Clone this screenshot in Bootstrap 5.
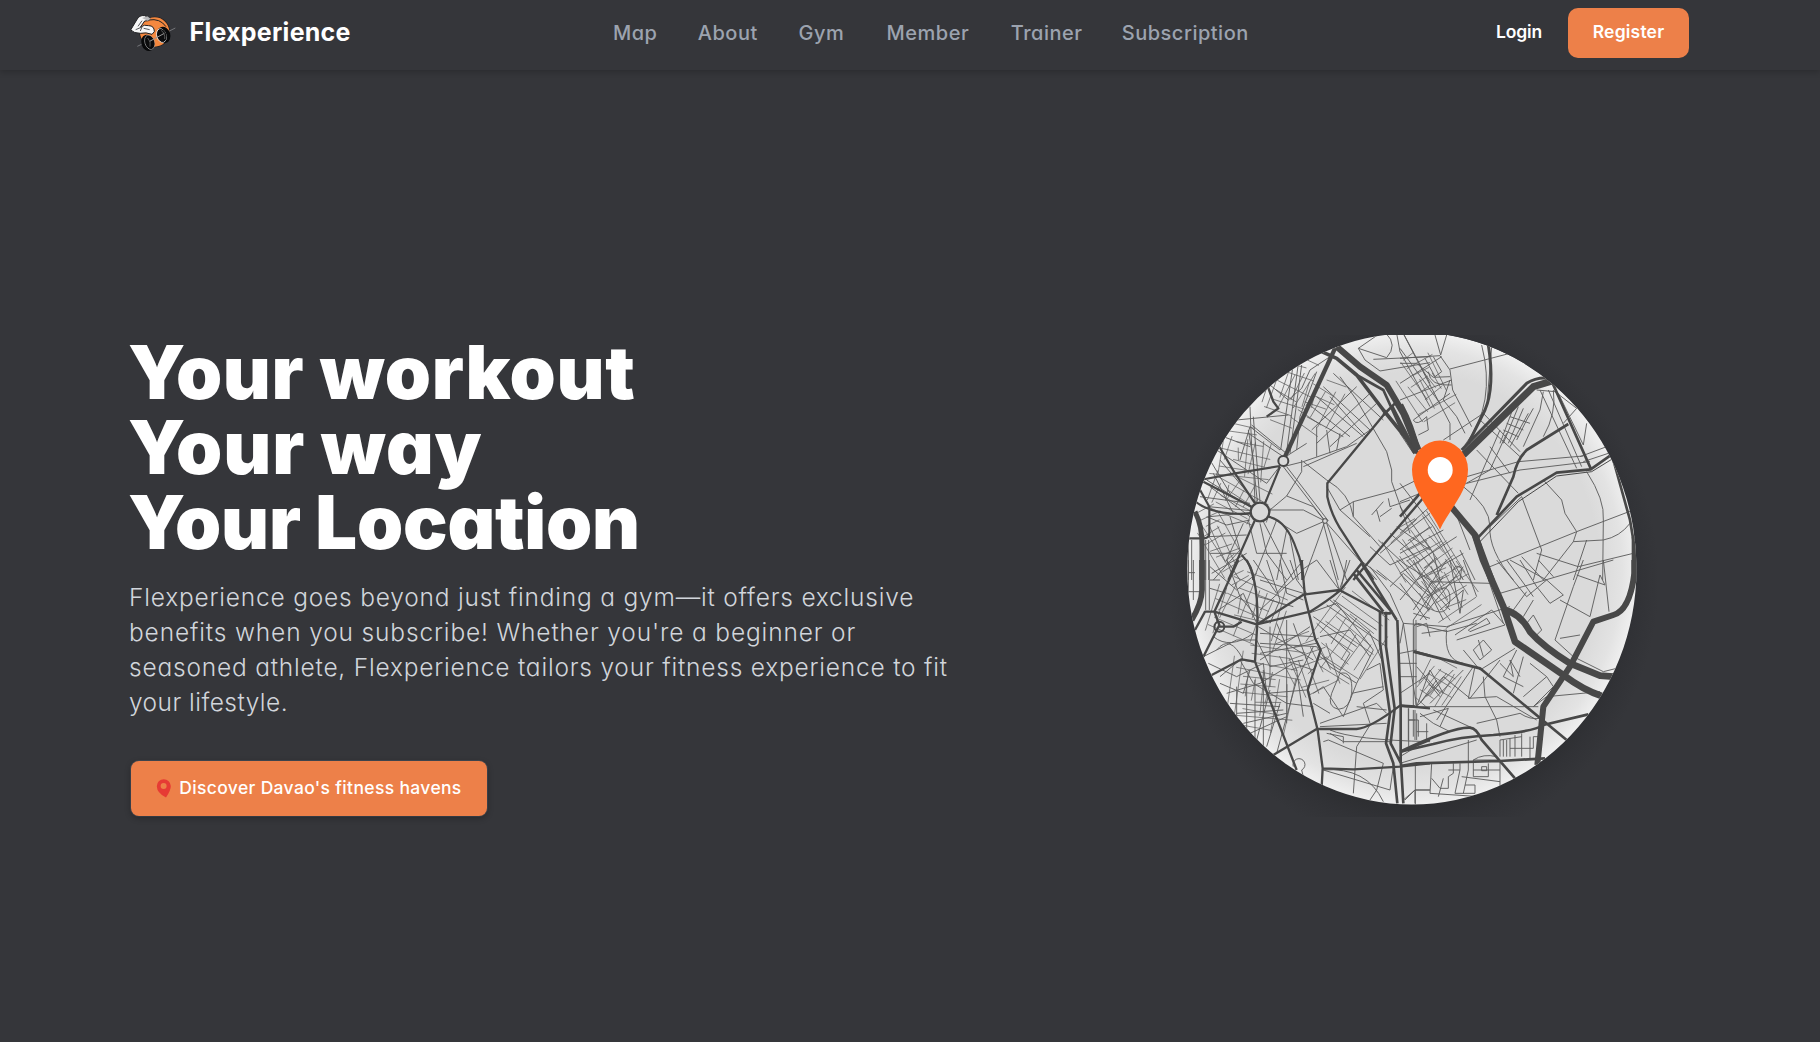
<!DOCTYPE html>
<html lang="en">
<head>
<meta charset="utf-8">
<meta name="viewport" content="width=device-width, initial-scale=1">
<title>Flexperience</title>
<link href="https://cdn.jsdelivr.net/npm/bootstrap@5.3.0/dist/css/bootstrap.min.css" rel="stylesheet">
<style>
body{background:#35363a;font-family:Inter,"Open Sans",sans-serif;font-feature-settings:"cv11";color:#fff;min-height:100vh;overflow:hidden}
.topbar{height:70px;padding:0 131px 0 129px;box-shadow:0 2px 6px rgba(0,0,0,.2)}
.brand-name{font-size:25px;font-weight:700;letter-spacing:.25px;line-height:32px;margin:0 0 6px 12.5px}
.site-links{left:613px;top:0;height:66px;gap:40px}
.site-links a{color:#9ca3af;font-size:20px;font-weight:500;letter-spacing:.5px;margin-right:-.5px;text-decoration:none;white-space:nowrap}
.link-map{width:45.3px}.link-about{width:61.3px}.link-gym{width:48.5px}.link-member{width:84.7px}.link-trainer{width:71.5px}
.login-link{font-size:17.5px;font-weight:600;letter-spacing:-.15px;margin:0 26px 1px 0;text-decoration:none}
.btn-brand{background:#ed8049;color:#fff;border:0;font-weight:600}
.btn-brand:hover{background:#e0733c;color:#fff}
.btn-register{width:121px;height:50px;border-radius:10px;font-size:17.5px;letter-spacing:.2px;padding:0 0 1px}
.account{margin-bottom:4px}
.hero{padding:265px 184px 0 129px}
.hero-title{font-size:74px;font-weight:900;line-height:75px;letter-spacing:.7px;margin:0 0 19.5px -1px}
.hero-title .way{letter-spacing:.9px}
.hero-title .place{letter-spacing:-.2px}
.hero-copy{font-size:24.5px;font-weight:300;line-height:35px;letter-spacing:.79px;color:#d1d5db;margin:0 0 41px;white-space:nowrap}
.copy-wide{letter-spacing:.85px}
.copy-tight{letter-spacing:.45px}
.btn-discover{width:356px;height:55px;border-radius:8px;margin-left:2px;font-size:17.5px;font-weight:500;letter-spacing:.34px;padding:0;box-shadow:0 2px 6px rgba(0,0,0,.3),0 0 0 1px rgba(75,85,99,.6);margin-top:1px}
.btn-discover svg{margin-right:7px}
.map-art{margin:-15px -24px 0 0}
</style>
<script src="https://cdn.jsdelivr.net/npm/bootstrap@5.3.0/dist/js/bootstrap.bundle.min.js"></script>
</head>
<body>
<header class="topbar d-flex align-items-center justify-content-between position-relative">
  <a href="#" class="d-flex align-items-center text-white text-decoration-none">
    <svg width="48" height="40" viewBox="57 37 144 120" class="mb-1">
      <circle cx="134" cy="94" r="46" fill="#1c1c1e"/>
      <circle cx="134" cy="94" r="44" fill="#f5883f"/>
      <path d="M116 58Q150 52 168 78" fill="none" stroke="#222" stroke-width="3"/>
      <path d="M62 88L80 58Q88 42 104 45L120 53L116 60L104 61L91 80Q103 70 116 75Q133 75 133 93L126 101Q108 94 91 98Q72 98 62 88Z" fill="#f7f7f7" stroke="#202022" stroke-width="3"/>
      <path d="M96 52L112 47L122 54L113 60L104 56Z" fill="#b9b9bb"/>
      <path d="M77 87L96 79L91 91M101 83L119 87M96 60L84 77" stroke="#55565a" stroke-width="3" fill="none"/>
      <path d="M82 137L105 126M142 109L196 82" stroke="#747579" stroke-width="3"/>
      <g transform="rotate(-17 115 126)"><ellipse cx="113" cy="126" rx="19" ry="25" fill="#08090a"/><ellipse cx="119" cy="126" rx="14" ry="22" fill="none" stroke="#a9a9aa" stroke-width="2"/><ellipse cx="120" cy="126" rx="13" ry="20" fill="#0b0b0c"/></g>
      <g transform="rotate(-17 160 103)"><ellipse cx="161" cy="103" rx="20" ry="25" fill="#08090a"/><ellipse cx="154" cy="103" rx="14" ry="21" fill="none" stroke="#e1e1e1" stroke-width="2.5"/><ellipse cx="156" cy="103" rx="13" ry="19" fill="#0d0d0e"/></g>
      <path d="M119 122L163 98" stroke="#999" stroke-width="3"/>
      <path d="M113 112Q124 122 120 138M153 89Q166 97 164 115" fill="none" stroke="#777" stroke-width="2"/>
    </svg>
    <span class="brand-name">Flexperience</span>
  </a>
  <nav class="site-links position-absolute d-flex align-items-center">
    <a href="#" class="link-map">Map</a><a href="#" class="link-about">About</a><a href="#" class="link-gym">Gym</a><a href="#" class="link-member">Member</a><a href="#" class="link-trainer">Trainer</a><a href="#">Subscription</a>
  </nav>
  <div class="account d-flex align-items-center">
    <a href="#" class="login-link text-white">Login</a>
    <button class="btn btn-brand btn-register">Register</button>
  </div>
</header>

<main class="hero d-flex justify-content-between align-items-start">
  <section>
    <h1 class="hero-title">Your workout<br><span class="way">Your way</span><br><span class="place">Your Location</span></h1>
    <p class="hero-copy">Flexperience goes beyond just finding a gym—it offers exclusive<br><span class="copy-wide">benefits when you subscribe! Whether you're a beginner or</span><br>seasoned athlete, Flexperience tailors your fitness experience to fit<br><span class="copy-tight">your lifestyle.</span></p>
    <button class="btn btn-brand btn-discover d-flex align-items-center justify-content-center">
      <svg width="16" height="19" viewBox="0 0 16 19"><path d="M10 18.5Q1 14 .8 7.2A7 6.8 0 0 1 14.8 7Q15 11 10 18.5Z" fill="#e63b34"/><circle cx="7.6" cy="7" r="3" fill="#ed8049"/></svg>
      <span>Discover Davao's fitness havens</span>
    </button>
  </section>

  <svg class="map-art flex-shrink-0" width="490" height="510" viewBox="1170 320 490 510" aria-label="Map">
    <defs>
      <clipPath id="disc"><path d="M1385 335H1448A224.5 236 0 0 1 1636.5 569A224.5 235.5 0 0 1 1187.3 569A224.5 236 0 0 1 1385 335Z"/></clipPath>
      <radialGradient id="paper"><stop offset=".83" stop-color="#dadada"/><stop offset=".93" stop-color="#e3e3e3"/><stop offset="1" stop-color="#f0f0f0"/></radialGradient>
      <radialGradient id="shade"><stop offset=".84" stop-color="#2d2e31"/><stop offset=".91" stop-color="#313236"/><stop offset="1" stop-color="#35363a"/></radialGradient>
      <clipPath id="frame"><rect x="1150" y="335" width="510" height="482"/></clipPath>
    </defs>
    <ellipse cx="1413" cy="580" rx="246" ry="266" fill="url(#shade)" clip-path="url(#frame)"/>
    <g clip-path="url(#disc)">
      <ellipse cx="1412" cy="569" rx="226" ry="237" fill="url(#paper)"/>
      <g id="streets" fill="none" stroke="#5c5c5c" stroke-width=".8" stroke-opacity=".85"></g>

      <g fill="none" stroke="#5c5c5c" stroke-width="2.8" transform="translate(1170 320) scale(.33333)">
        <path d="M648 40Q684 75 650 113L565 85L630 40M565 85L585 120L630 153L780 128M610 118L780 110M680 40L690 95L780 260M700 40L780 190"/>
        <path d="M300 195L355 240L395 205L420 150L480 110M385 130L350 395M395 135L360 400M370 130L332 390M440 155L390 290L380 390"/>
        <path d="M240 260L245 380L262 545M250 290L270 545M235 330L250 420L255 548M245 315L355 405M235 340L340 410"/>
        <path d="M200 300L355 285M210 420L240 320L330 390M160 350L240 380M140 390L290 490L340 425M120 420L180 520M150 420L260 550"/>
        <path d="M110 480L255 570M120 500L240 590M130 460L190 580M90 530L240 550M115 560L245 572M120 590L245 577"/>
        <path d="M300 570L350 528L430 560L465 603M300 570L400 570L465 603M340 440L465 603M350 440L475 603M465 603L430 700L400 780M460 610L505 780M470 610L530 780M465 603L380 640L300 590M270 610L290 700L350 780M280 605L370 780M465 603L620 780"/>
        <path d="M355 405L410 370M340 440L400 425L470 480Q540 520 550 590L630 680M395 420L395 455L350 528M400 425L530 380L600 330M400 440L560 370M510 170L560 240L650 395L665 450L665 485L720 640M480 230L560 320L590 350M510 570L550 545L680 510L780 460M550 590L550 545M470 500L510 570L600 650"/>
        <path d="M605 585L640 545M620 570L630 605M630 590L665 565M655 535L660 560L720 540M600 680L660 735L780 680M625 660L700 730L780 780M660 640L750 720M680 620L780 690M570 720L650 780M690 690L780 620M630 700L700 640L780 580"/>
        <path d="M110 590L170 615L240 600M115 650L230 645M120 700L210 700M125 760L230 700M180 590L210 690L130 780M220 610L170 720L210 780M235 600L260 700L350 700M250 780L320 600M350 630L320 780M360 650L385 780M55 660V780M65 660V780M107 660V780M116 660V780"/>
        <path d="M410 290L520 350M425 260L540 350M440 230L580 350M460 200L600 330M490 160L640 300M425 330L560 200M440 370L600 220M480 380L620 250M440 320L440 410M470 330L480 400M510 340L500 390"/>
      </g>
      <g fill="none" stroke="#5c5c5c" stroke-width="2.8" transform="translate(1400 320) scale(.33333)">
        <path d="M0 115L120 107L150 150L158 210L215 320M105 45L122 105L140 45M0 130L50 130L100 172L150 170M12 45L150 310L150 360M0 85L120 250M150 147L330 100M0 190L125 110M0 240L155 180M40 300L150 220M40 300Q50 320 80 290L85 330L55 345M130 240L170 290L195 340M130 240L150 180M75 115L105 170L125 155L100 110M85 155Q90 200 155 195"/>
        <path d="M245 75Q290 250 195 375M275 80L262 240M130 360L250 280L360 395M240 300L360 410M300 330L210 540M320 340L270 450L190 495M0 340L40 400M200 470L355 425L550 408M200 490L360 450L570 425M230 390L355 520M270 380L330 460M190 500Q270 560 270 620Q265 690 340 780"/>
        <path d="M410 210L465 215L530 265L490 310M430 215L420 270L370 380M460 210Q470 280 430 350M420 210L530 445M445 210L545 440M475 220L550 375L560 310M400 265L380 300L350 360M345 250L300 370M355 260L310 370M370 265L325 370M385 280L330 380M330 290L390 310M320 310L370 330M310 330L355 350"/>
        <path d="M540 410L620 380M550 425L640 395M560 455Q615 540 610 600L608 780M430 480L485 540L495 580L530 635L520 665L430 780M270 620L365 530L425 690L400 780M270 740L530 635L700 570M520 665L610 660Q660 650 690 610M410 700L535 740L700 700M560 660L520 780M365 710L430 780"/>
        <path d="M0 545L60 520M0 560L100 700L120 780M0 490L100 620L190 780M0 640L90 560M0 700L130 630M0 760L170 650M50 780L190 700M160 750Q165 730 185 745L180 780M180 690L225 780M160 560L210 690"/>
      </g>
      <g fill="none" stroke="#5c5c5c" stroke-width="2.8" transform="translate(1170 560) scale(.33333)">
        <path d="M55 0V100M70 0V120M107 0V150M118 0V150M55 38H75M55 95H90M120 60H150M120 85L170 100M120 20L200 90L260 40M170 0L210 110L260 170M145 150L220 100L260 190M250 0L320 100L400 0M290 0L330 120L300 190M330 0L350 100L400 120M360 0L380 60L410 100M270 60L400 100M265 110L370 140M270 150L400 30M440 0L508 90L540 0M395 30L440 0M480 0L508 90M530 0L515 80"/>
        <path d="M100 290L200 240L260 240L300 320L400 300M130 230Q180 270 250 220M140 270Q180 220 220 300M115 310L200 350L280 310L290 400L410 390M150 350L210 300L250 370L350 430L430 440M150 370L220 400L240 330M170 400L270 370L370 310L430 330M180 430L330 440M200 460L340 450M220 490L350 460M240 520L350 470M260 540L300 390M290 560L330 430M320 580L380 360L430 260M200 380V480M230 370V510M255 360V540M280 330V560M300 200V380M320 190L380 330L400 470M350 180L350 490M370 190L410 300M270 220L430 230M270 250L440 260M270 280L440 250M265 200L430 300M270 300L420 200"/>
        <path d="M415 160L500 130L610 270L560 370L480 320L440 260M450 230L540 210L600 290M480 120L600 220L640 310M470 135L650 260M490 120L620 210M430 170L560 260M440 190L540 280L510 330L450 290M510 340Q550 330 545 400Q540 445 505 448Q470 440 485 400ZM430 400L460 380L520 470L560 370M590 330L630 310L640 390L580 430L600 490M545 400L640 380M560 440L650 450M430 430L480 460M450 490L620 430L650 460M450 500L650 490M480 510Q550 540 780 545M480 520L520 545L660 545M520 550V530L470 520M460 545L475 540L640 610L620 690L600 720M550 700L560 560L600 495M460 630Q590 620 640 725M460 630L660 690L670 620M700 720L735 690H780M735 690V730"/>
        <path d="M600 20L660 100L700 190L740 440M620 30L730 120L780 150M680 0L740 70L780 100M660 80L700 40L780 110M730 180V440M738 180V440M700 190L690 250M740 200L770 190L780 230M730 160L780 175M690 280L740 270M690 310H740M690 350H740M690 400L780 340M740 440L780 330M715 445V540M730 450V530M715 480H745V530"/>
        <path d="M370 620A18 18 0 1 1 395 630L400 650"/>
      </g>
      <g fill="none" stroke="#5c5c5c" stroke-width="2.8" transform="translate(1400 560) scale(.33333)">
        <path d="M42 270V200Q45 180 80 200L140 215L230 190M10 190L140 200L330 140M90 65L270 70M40 180L130 50M100 100Q150 60 150 120Q140 180 80 140ZM120 150L190 90L180 160M65 220L140 210Q130 300 190 310M165 225L275 150L315 195L170 240M205 210L260 175L270 190L210 215ZM190 270L240 330L345 265M220 270L250 240L275 270L240 300ZM235 240L250 290M245 0L310 190M258 0L325 200M190 0L230 110M150 0L180 160M300 100L640 0M290 0L380 110L440 60L490 105L450 130L410 80M320 0L400 110M330 0L440 60M360 0L410 80M340 150L380 95M370 170L400 120M380 190L400 165L425 210L400 235"/>
        <path d="M415 0L460 50M550 0L520 80L465 240M530 45L615 75L600 45L570 170M480 120L570 170M610 0L627 155M480 235L540 225M465 240L520 290L610 335L650 325M350 270L310 350L370 380M370 290L340 400M390 310L440 350L370 410M440 350L460 380L400 440M330 300L360 350M300 310L340 350L330 300M400 440L440 410L600 395"/>
        <path d="M0 440H415M50 440L130 350L210 415L300 300M205 415L225 320M205 415L290 410L410 480M250 350L255 410L290 480L300 530M230 490L360 460Q390 480 420 475M100 450L230 510M120 500L145 445L60 470M60 460L100 490L150 515M70 350L120 410M90 330L130 400M80 410L160 330M90 430L190 330M60 430L110 360M110 480L220 320M50 320L120 400M40 0L130 180M0 40L100 150M0 70L80 180M20 0L150 150M0 120L100 0M40 150L140 0M60 180L190 20"/>
        <path d="M26 445V560M45 450V540M26 480H45M50 460V540M80 490V540M50 515H85M0 610L230 540M0 590L50 560M205 540V630L190 700M220 600H300V680M220 600V650H265V610M220 630H300M245 620H260V632H245ZM95 610L90 700L240 710M95 655L120 685H145V650L160 640V610M115 710L130 655M145 630H180V610M180 630L165 700H225V675H195M185 650L300 665M46 610V740M15 720L45 690H90M220 600Q250 580 290 590M300 540V590M310 540V590M320 540V590M330 535V590M345 525V590M365 520V590M300 540L365 530M330 565H400V530H420M390 600V530"/>
      </g>

      <g fill="none" stroke="#484848" stroke-linejoin="round">
        <g transform="translate(1170 320) scale(.33333)">
          <path d="M495 85L345 410" stroke-width="13"/>
          <path d="M500 80L570 140L650 195L700 280L745 390" stroke-width="19"/>
          <path d="M455 95L500 115L560 165L640 270L745 400" stroke-width="11"/>
          <path d="M560 165L640 210L690 320L735 395M640 285L675 250M665 255L740 400" stroke-width="8"/>
          <path d="M645 280L472 490V530Q485 590 520 640L610 780M780 510L550 780M290 190L310 245L325 265L290 290" stroke-width="7"/>
          <path d="M90 480L195 460L330 438M145 375L195 460L255 550M100 485L245 560M70 540Q130 590 245 580M330 440L285 550M255 600L175 780M295 590Q350 600 380 690Q398 730 397 780M215 705Q250 740 250 780M85 500L118 560V640Q118 655 100 655H55" stroke-width="6.5"/>
          <path d="M75 575Q98 620 96 680V780" stroke-width="15"/>
          <circle cx="340" cy="423" r="15" fill="#dadada" stroke-width="6"/><circle cx="270" cy="576" r="28" fill="#dadada" stroke-width="7"/><circle cx="465" cy="603" r="7" fill="#dadada" stroke-width="3"/>
        </g>
        <g transform="translate(1400 320) scale(.33333)">
          <path d="M0 255Q35 320 50 390" stroke-width="20"/><path d="M0 325L45 400" stroke-width="10"/>
          <path d="M190 405L400 200L460 182" stroke-width="21"/><path d="M185 390L380 190Q410 170 450 175" stroke-width="9"/>
          <path d="M265 75Q285 200 255 270L205 370" stroke-width="9"/>
          <path d="M458 190L572 445M505 312L380 390Q350 420 340 470L290 585M232 655L350 530L470 458L572 448L640 400M640 420L690 600L700 660" stroke-width="8"/>
          <path d="M60 520L0 590" stroke-width="8"/>
          <path d="M145 550L225 645L276 783" stroke-width="19"/><path d="M703 650V780" stroke-width="16"/>
          <path d="M240 665L355 545L470 468L575 455L640 415M650 420L700 590" stroke-width="3"/>
        </g>
        <g transform="translate(1170 560) scale(.33333)">
          <path d="M96 0V90Q95 130 65 180" stroke-width="17"/>
          <path d="M205 0L133 155L260 193L420 155Q470 125 510 92L575 10M230 0Q265 60 262 190L255 305L380 630M262 193L400 104L508 90L640 160M395 0L405 110L435 235L452 270L413 390L443 510L458 625L455 680M75 210L105 155H133L148 195L100 290M148 200H190L215 185M125 345L215 298L255 305M310 585L440 507H560Q600 505 690 437L780 445M458 625L550 628L690 620L780 610M695 575L780 540" stroke-width="7"/>
          <circle cx="148" cy="200" r="15" stroke-width="6"/>
          <path d="M560 30L660 150M550 40L640 155M575 10L680 180M630 155V250L660 460L648 550L670 610L682 730M648 155V260L674 445L662 550L693 610L700 730M682 180L692 440V610M640 160H660L665 150M735 275L780 287" stroke-width="8"/>
        </g>
        <g transform="translate(1400 560) scale(.33333)">
          <path d="M225 -75L249 0L310 140L345 245L490 345Q550 390 605 408M315 150Q360 160 390 215Q430 260 510 310L600 347L640 350" stroke-width="20"/>
          <path d="M703 0V40Q690 150 640 165L580 185L510 320L430 440L412 615" stroke-width="18"/>
          <path d="M40 275L240 325L500 540M0 575Q160 500 210 503Q230 505 245 540L345 655M0 575L100 552Q180 530 280 525Q400 515 430 495L565 463M0 618L50 610L300 603L435 595M0 437L45 440" stroke-width="8"/>
        </g>
      </g>
    </g>
    <path d="M1440 529.5C1430 508 1412 492 1412 469.5A28 29 0 0 1 1468 469.5C1468 492 1450 508 1440 529.5Z" fill="#ff671f"/>
    <ellipse cx="1440.2" cy="470" rx="12.5" ry="13" fill="#fff"/>
  </svg>
</main>
<script>
// Fine street grids: centre x, centre y, width, height, angle, spacing across, spacing along
const districts=[[1320,405,40,50,30,9,10],[1425,385,45,65,-32,7,9],[1243,455,60,60,10,8,9],[1222,545,32,80,-28,7,8],[1250,610,75,70,20,8,9],[1265,690,70,85,8,8,8],[1348,640,65,85,35,9,10],[1425,555,55,75,-35,6,8],[1450,590,55,65,-32,8,9],[1290,390,50,70,22,8,10],[1437,685,40,45,35,7,9],[1310,665,50,65,-22,8,10],[1240,500,65,40,25,8,8]];
let seed=11;
const rnd=()=>(seed=(seed*16807)%2147483647)/2147483647;
let out='';
for(const [cx,cy,w,h,a,dx,dy] of districts){
  let d='';
  for(let x=-w/2;x<=w/2;x+=dx){const s=-h/2+rnd()*h*.4,e=h/2-rnd()*h*.4,j=(rnd()-.5)*9;d+=`M${x} ${s}L${x+j} ${e}`}
  for(let y=-h/2;y<=h/2;y+=dy){const s=-w/2+rnd()*w*.4,e=w/2-rnd()*w*.4,j=(rnd()-.5)*9;d+=`M${s} ${y}L${e} ${y+j}`}
  out+=`<path transform="translate(${cx} ${cy}) rotate(${a})" d="${d}"/>`;
}
document.getElementById('streets').innerHTML=out;
</script>
</body>
</html>
